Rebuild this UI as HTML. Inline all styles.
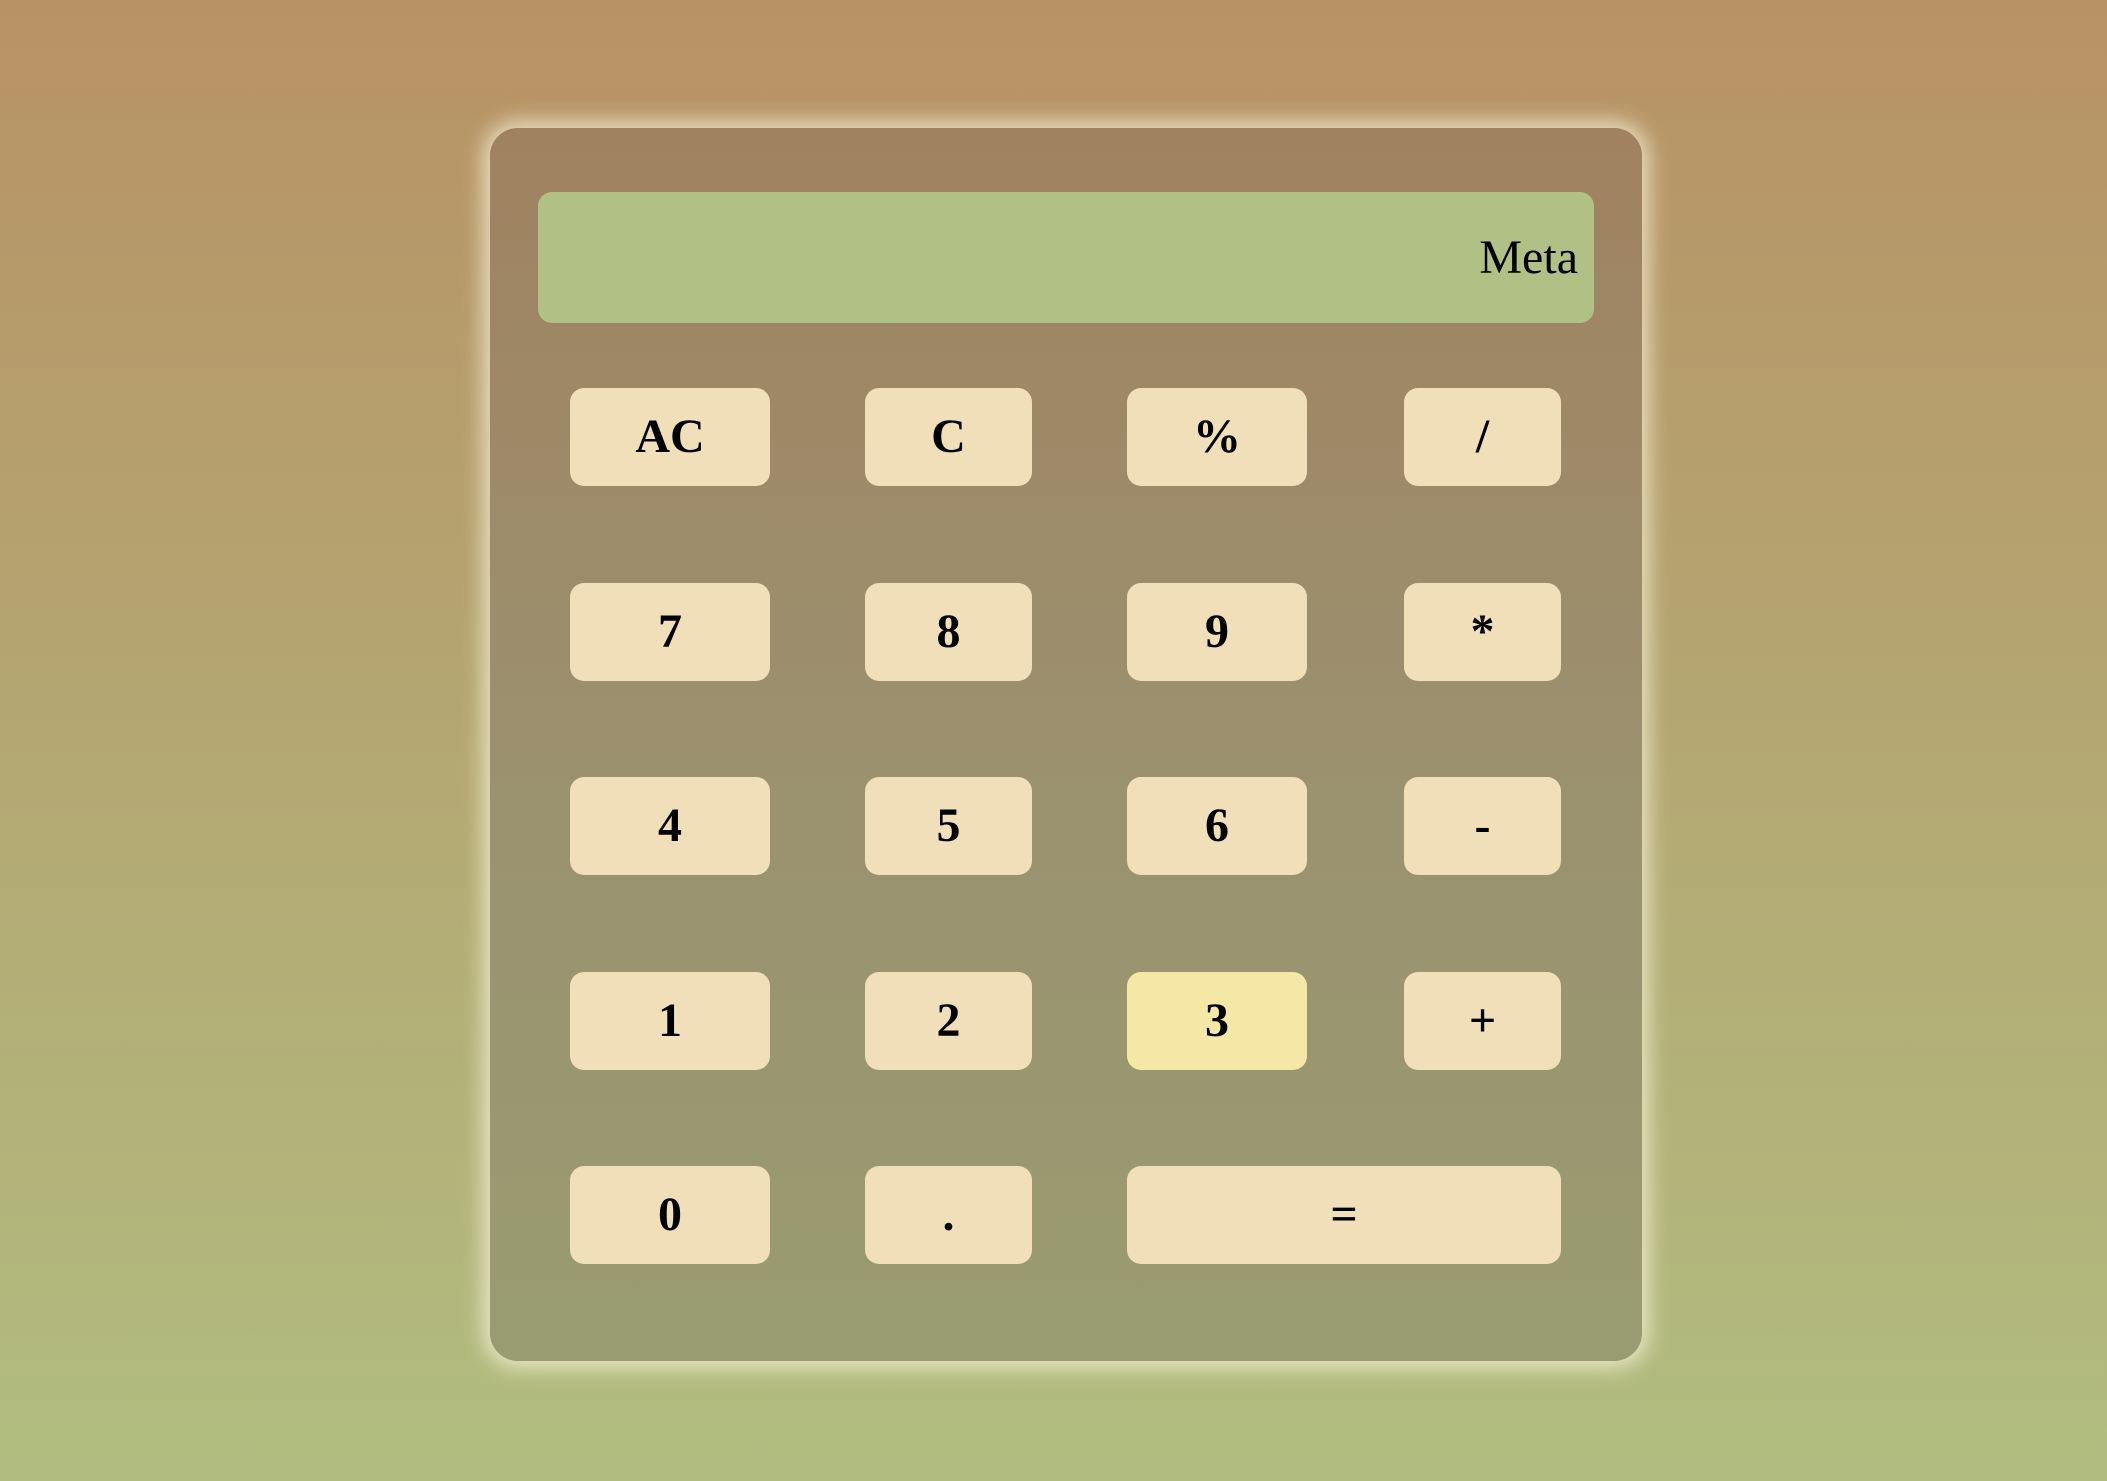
<!DOCTYPE html>
<html><head><meta charset="utf-8"><style>
html,body{margin:0;padding:0}
body{width:2107px;height:1481px;overflow:hidden;background:linear-gradient(180deg,#b89265 0%,#b4a571 45%,#b1bd80 100%);font-family:"Liberation Serif",serif;position:relative}
.calc{position:absolute;left:490px;top:128px;width:1152px;height:1233px;border-radius:28px;background:linear-gradient(180deg,#a08260 0%,#9b9270 55%,#999c70 100%);box-shadow:0 0 22px 6px rgba(255,250,225,0.75)}
.disp{position:absolute;left:538px;top:192px;width:1056px;height:131px;border-radius:14px;background:#b1c185;box-sizing:border-box;text-align:right;padding-right:16px;font-size:48px;line-height:131px;color:#000}
.b{position:absolute;height:98px;border-radius:14px;background:#f0dfb8;font-weight:bold;font-size:48px;line-height:98px;text-align:center;color:#000}
.c1{left:570px;width:200px}.c2{left:865px;width:167px}.c3{left:1127px;width:180px}.c4{left:1404px;width:157px}
.r1{top:388px}.r2{top:583px}.r3{top:777px}.r4{top:972px}.r5{top:1166px}
.hl{background:#f5e8a6}
</style></head><body>
<div class="calc"></div>
<div class="disp">Meta</div>
<div class="b c1 r1">AC</div><div class="b c2 r1">C</div><div class="b c3 r1">%</div><div class="b c4 r1">/</div>
<div class="b c1 r2">7</div><div class="b c2 r2">8</div><div class="b c3 r2">9</div><div class="b c4 r2">*</div>
<div class="b c1 r3">4</div><div class="b c2 r3">5</div><div class="b c3 r3">6</div><div class="b c4 r3">-</div>
<div class="b c1 r4">1</div><div class="b c2 r4">2</div><div class="b c3 r4 hl">3</div><div class="b c4 r4">+</div>
<div class="b c1 r5">0</div><div class="b c2 r5">.</div><div class="b r5" style="left:1127px;width:434px">=</div>
</body></html>
